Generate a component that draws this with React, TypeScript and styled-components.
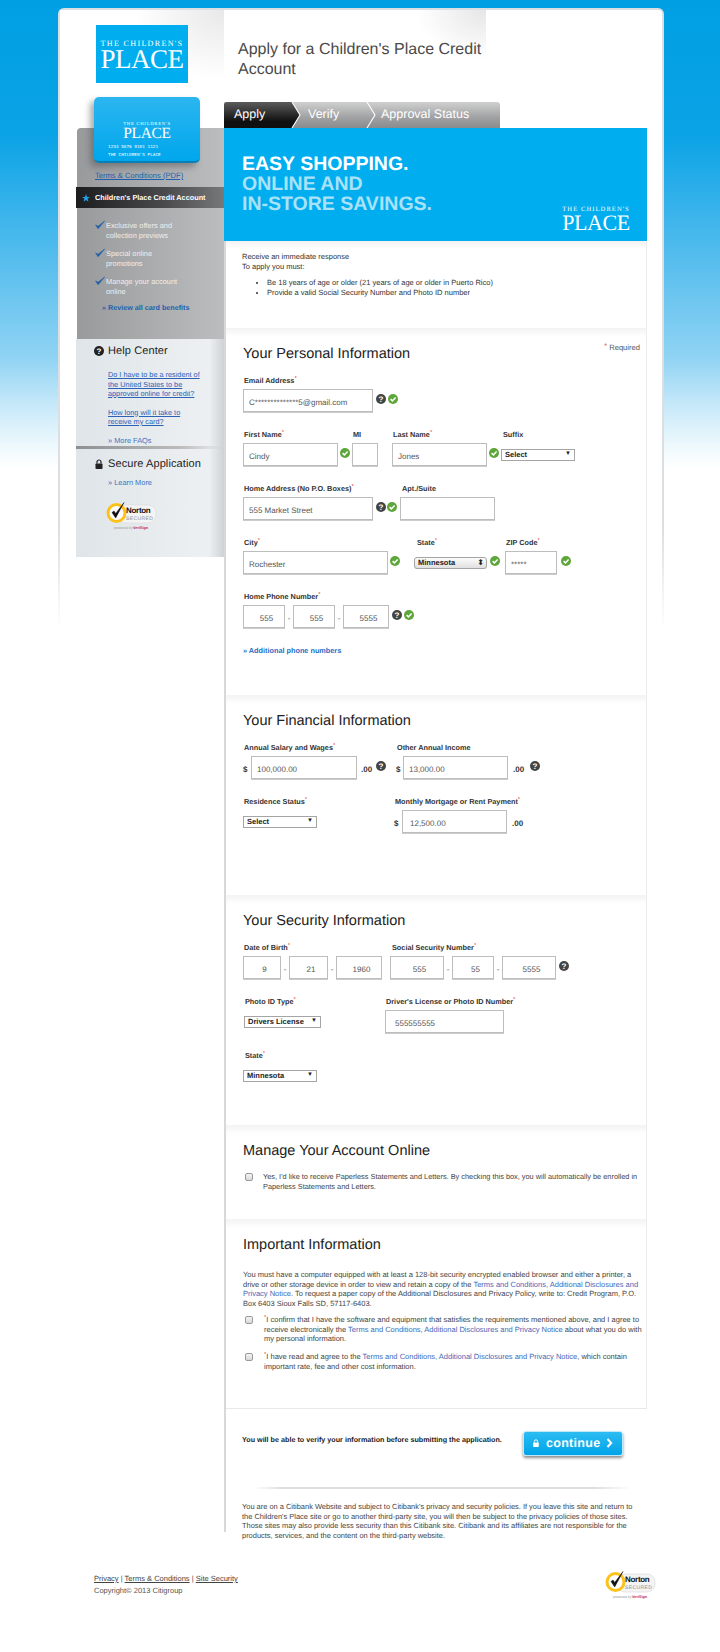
import React from "react";
import styled, { createGlobalStyle } from "styled-components";

const Global = createGlobalStyle`
  html, body { margin: 0; padding: 0; background: #fff; }
  * { box-sizing: border-box; }
  body {
    font-family: "Liberation Sans", Arial, sans-serif;
    color: #333;
    text-rendering: geometricPrecision;
  }
  input, select, button { text-rendering: geometricPrecision; }
`;

const Page = styled.div`
  width: 720px;
  height: 1652px;
  overflow: hidden;
  padding-top: 8px;
  background: linear-gradient(#009fe3 0, #0aa3e6 134px, #5bbfee 268px, #8fd3f3 357px, #c3e7f9 402px, #eef9fd 446px, #fff 469px);
`;

const Shell = styled.div`
  position: relative;
  width: 606px;
  margin-left: 58px;
  height: 1644px;
  background: #fff;
  border-radius: 6px 6px 0 0;
  border: 2px solid #dcdfe1;
  border-bottom: 0;
  &::after {
    content: "";
    position: absolute;
    left: -2px;
    right: -2px;
    top: 520px;
    bottom: 0;
    pointer-events: none;
    background: linear-gradient(rgba(255,255,255,0), #fff 100px);
    clip-path: polygon(0 0, 2px 0, 2px 100%, 0 100%, 0 0, 100% 0, 100% 100%, calc(100% - 2px) 100%, calc(100% - 2px) 0);
  }
`;

const Header = styled.header`
  display: flex;
  height: 92px;
`;

const LogoCell = styled.div`
  width: 164px;
  padding: 15px 0 0 36px;
  background: radial-gradient(ellipse 90px 70px at 100% 0, #e8e8e8, #fff 100%);
`;

const TitleCell = styled.div`
  width: 262px;
  padding: 30px 0 0 14px;
  background: radial-gradient(ellipse 70px 50px at 100% 0, #e6e6e6, #fff 100%);
`;

const Title = styled.h1`
  margin: 0;
  font-size: 16px;
  font-weight: 400;
  line-height: 20px;
  color: #4a4a4a;
`;

const BrandLogo = styled.div<{ $w: number; $h: number; $size: number; $bg?: string }>`
  width: ${(p) => p.$w}px;
  height: ${(p) => p.$h}px;
  padding-top: ${(p) => p.$size * 0.2}px;
  background: ${(p) => p.$bg || "transparent"};
  display: flex;
  flex-direction: column;
  align-items: center;
  justify-content: center;
  color: #fff;
  font-family: "Liberation Serif", serif;
  font-weight: 400;
  line-height: 1;
  span:first-child {
    font-size: ${(p) => p.$size * 0.3}px;
    letter-spacing: ${(p) => p.$size * 0.048}px;
    white-space: nowrap;
  }
  span:last-child {
    font-size: ${(p) => p.$size}px;
    letter-spacing: ${(p) => p.$size * -0.02}px;
    margin-top: ${(p) => p.$size * -0.08}px;
  }
`;

const Main = styled.div`
  display: flex;
  align-items: flex-start;
`;

const Sidebar = styled.aside`
  position: relative;
  width: 147px;
  margin: 26px 0 0 17px;
`;

const CreditCard = styled.div`
  position: absolute;
  left: 17px;
  top: -31px;
  width: 106px;
  height: 66px;
  border-radius: 5px;
  background: linear-gradient(#2bb6f0, #00a6ec);
  border-bottom: 2px solid #0a7fb5;
  box-shadow: -4px 4px 6px rgba(70, 70, 70, 0.45);
  padding: 25px 0 0 14px;
  color: #fff;
  z-index: 2;
`;

const CardLogo = styled(BrandLogo)`
  margin: 0 0 0 11px;
`;

const CardNum = styled.div`
  font-family: "Liberation Mono", monospace;
  font-size: 4.4px;
  line-height: 8px;
  white-space: nowrap;
`;

const CardGap = styled.div`
  height: 5px;
`;

const GreyBlock = styled.div`
  height: 211px;
  padding-top: 43px;
  background: linear-gradient(90deg, #989a9c, #bcbdbf);
  border-radius: 4px 0 0 0;
  font-size: 7.4px;
`;

const TermsLink = styled.a`
  display: block;
  margin-left: 18px;
  height: 16px;
  font-size: 7.6px;
  line-height: 10px;
  color: #1f5fb0;
  text-decoration: underline;
`;

const DarkBar = styled.div`
  display: flex;
  align-items: center;
  height: 21px;
  margin-left: -1px;
  padding-left: 6px;
  background: linear-gradient(90deg, #1d1d1f, #4a4a4c 60%, #77787a);
  color: #fff;
  font-weight: 700;
  font-size: 7.3px;
  gap: 5px;
`;

const Perks = styled.ul`
  list-style: none;
  margin: 13px 0 0 0;
  padding: 0 0 0 23px;
`;

const Perk = styled.li`
  position: relative;
  height: 28px;
  padding-left: 6px;
  color: #eee;
  font-size: 7.4px;
  line-height: 9.5px;
  svg {
    position: absolute;
    left: -5px;
    top: -1px;
  }
`;

const Review = styled.a`
  display: block;
  margin: -2px 0 0 25px;
  color: #1f5fb0;
  font-size: 7.2px;
  font-weight: 700;
`;

const HelpBlock = styled.div`
  position: relative;
  height: 218px;
  margin-left: -1px;
  background: linear-gradient(90deg, #dfe5e9, #edf0f2 90%, #cfd2d4);
  padding-top: 4px;
`;

const SideHead = styled.div`
  display: flex;
  align-items: center;
  height: 16px;
  margin-left: 18px;
  gap: 4px;
  font-size: 11px;
  color: #222;
  letter-spacing: 0.1px;
`;

const SideLink = styled.a`
  display: block;
  margin-left: 32px;
  font-size: 7.3px;
  line-height: 9.5px;
  color: #2a62b8;
  text-decoration: underline;
`;

const SideLinks = styled.div`
  display: flex;
  flex-direction: column;
  gap: 9px;
  margin-top: 11px;
`;

const More = styled.a<{ $mt: number }>`
  display: block;
  margin: ${(p) => p.$mt}px 0 0 32px;
  font-size: 7.4px;
  line-height: 10px;
  color: #3d74c0;
`;

const SideRule = styled.div`
  height: 3px;
  margin: 0 0 7px;
  background: linear-gradient(90deg, #8d8f91, #bbb 70%, rgba(200,200,200,0));
`;

const NortonWrap = styled.div`
  margin: 11px 0 0 30px;
`;

const Content = styled.main`
  width: 423px;
  border-left: 2px solid #d8d8d8;
`;

const Tabs = styled.div`
  display: flex;
  align-items: stretch;
  width: 276px;
  height: 25.5px;
  margin-left: -2px;
  background: linear-gradient(#d0d0d0, #a0a1a3 60%, #8a8b8d);
  border-radius: 3px 3px 0 0;
  overflow: hidden;
`;

const Tab = styled.div<{ $active?: boolean; $w: number; $pad: number }>`
  width: ${(p) => p.$w}px;
  padding-left: ${(p) => p.$pad}px;
  line-height: 24px;
  font-size: 12.5px;
  color: #fff;
  background: ${(p) => (p.$active ? "linear-gradient(#5c5c5c, #101010 75%)" : "transparent")};
`;

const Arrow = styled.svg`
  display: block;
  flex: none;
  margin-right: -1px;
`;

const Hero = styled.div`
  position: relative;
  width: 423px;
  height: 113.5px;
  margin-left: -2px;
  padding: 26px 0 0 18px;
  background: #00aeef;
  font-weight: 700;
  font-size: 19.5px;
  line-height: 20px;
  color: #a9e1f8;
  b { color: #fff; display: block; }
`;

const HeroLogo = styled(BrandLogo)`
  position: absolute;
  right: 13px;
  bottom: 9px;
`;

const Section = styled.section<{ $h: number }>`
  position: relative;
  height: ${(p) => p.$h}px;
  padding: 16px 0 0 17px;
  border-right: 1px solid #ececec;
  background: linear-gradient(#f3f3f3, #fff 9px) no-repeat;
`;

const Intro = styled.div`
  height: 87px;
  padding: 11px 0 0 16px;
  border-right: 1px solid #ececec;
  font-size: 7.5px;
  line-height: 9.5px;
  color: #333;
  background: linear-gradient(#f2f2f2, #fff 8px) no-repeat;
  ul { margin: 7px 0 0; padding: 0 0 0 25px; }
`;

const H2 = styled.h2<{ $mb?: number }>`
  margin: 0 0 ${(p) => p.$mb ?? 12}px;
  font-size: 14.5px;
  line-height: 20px;
  font-weight: 400;
  color: #222;
`;

const Required = styled.div`
  position: absolute;
  right: 6px;
  top: 15px;
  font-size: 7.6px;
  color: #555;
  i { color: #e33; font-style: normal; vertical-align: 2px; font-size: 7px; line-height: 0; }
`;

const Row = styled.div`
  display: flex;
  align-items: flex-start;
  margin-bottom: 18px;
`;

const Field = styled.div<{ $w?: number; $dx?: number }>`
  width: ${(p) => (p.$w ? p.$w + "px" : "auto")};
  margin-left: ${(p) => p.$dx ?? 0}px;
  flex: none;
`;

const Label = styled.label<{ $pl?: number }>`
  display: block;
  height: 10px;
  margin-bottom: 3px;
  padding-left: ${(p) => p.$pl ?? 1}px;
  font-size: 7.3px;
  line-height: 10px;
  font-weight: 700;
  color: #333;
  white-space: nowrap;
  i { color: #e33; font-style: normal; font-size: 6px; line-height: 0; vertical-align: 3px; font-weight: 400; }
`;

const Controls = styled.div`
  display: flex;
  align-items: center;
  height: 23px;
`;

const Input = styled.input<{ $w: number; $center?: boolean; $pad?: number }>`
  width: ${(p) => p.$w}px;
  height: 23px;
  flex: none;
  padding: 3px 0 0 ${(p) => p.$pad ?? 5}px;
  border: 1px solid #bdbdbd;
  box-shadow: 0 1px 0 #ccc;
  outline: 0;
  background: #fff;
  color: #555;
  font: 8px "Liberation Sans", Arial, sans-serif;
  text-align: ${(p) => (p.$center ? "center" : "left")};
`;

const Sel = styled.select<{ $w: number }>`
  appearance: none;
  display: block;
  width: ${(p) => p.$w}px;
  height: 12px;
  padding: 0 0 0 3px;
  border: 1px solid #a5a5a5;
  border-radius: 0;
  background: transparent;
  color: #222;
  font: 700 7.5px "Liberation Sans", Arial, sans-serif;
  outline: 0;
`;

const SelWrap = styled.div<{ $stepper?: boolean }>`
  position: relative;
  flex: none;
  background: ${(p) => (p.$stepper ? "linear-gradient(#fff, #ddd)" : "#fff")};
  border-radius: ${(p) => (p.$stepper ? "3px" : "0")};
  select { border-radius: ${(p) => (p.$stepper ? "3px" : "0")}; }
  &::after {
    content: "${(p) => (p.$stepper ? "⬍" : "▼")}";
    position: absolute;
    right: ${(p) => (p.$stepper ? 3 : 4)}px;
    top: 0;
    line-height: 11px;
    font-size: ${(p) => (p.$stepper ? 8 : 6)}px;
    color: #222;
    pointer-events: none;
  }
`;

const Gap = styled.span<{ $w: number }>`
  display: inline-block;
  flex: none;
  width: ${(p) => p.$w}px;
`;

const Dash = styled.span<{ $w: number }>`
  flex: none;
  width: ${(p) => p.$w}px;
  text-align: center;
  padding-top: 4px;
  font-size: 8px;
  color: #555;
`;

const Money = styled.span<{ $w: number }>`
  flex: none;
  width: ${(p) => p.$w}px;
  font-size: 8px;
  font-weight: 700;
  padding-top: 3px;
  color: #333;
`;

const AddPhones = styled.a`
  display: block;
  font-size: 7.3px;
  font-weight: 700;
  color: #1f6cc4;
  line-height: 10px;
  margin-top: 1px;
`;

const CheckLine = styled.div<{ $size?: number }>`
  display: flex;
  margin-bottom: 8.5px;
  font-size: ${(p) => p.$size ?? 7.5}px;
  line-height: 9.5px;
  color: #444;
  a { color: #3f68b8; }
`;

const Box = styled.span`
  flex: none;
  width: 8px;
  height: 8px;
  margin: 1px 0 0 2px;
  border: 1px solid #9a9a9a;
  border-radius: 2px;
  background: linear-gradient(#f4f4f4, #d8d8d8);
`;

const CheckText = styled.div<{ $pad: number }>`
  margin-left: ${(p) => p.$pad}px;
  width: 382px;
  i { color: #e33; font-style: normal; font-size: 6px; line-height: 0; vertical-align: 3px; }
`;

const Para = styled.p`
  margin: 15px 0 7px;
  width: 401px;
  font-size: 7.5px;
  line-height: 9.5px;
  color: #444;
  a { color: #3f68b8; }
`;

const ContentFoot = styled.div`
  border-top: 1px solid #e8e8e8;
  height: 124px;
  padding: 0 0 0 16px;
`;

const ContinueRow = styled.div`
  display: flex;
  align-items: center;
  width: 381px;
  height: 46px;
  margin-top: 11px;
  font-size: 7.2px;
  font-weight: 700;
  color: #222;
  white-space: nowrap;
  span { margin-top: -8px; }
`;

const Continue = styled.button`
  display: flex;
  align-items: center;
  flex: none;
  width: 100px;
  height: 25px;
  margin-left: auto;
  padding: 0 0 0 8px;
  gap: 6px;
  border: 1px solid #bfe8fa;
  border-radius: 3px;
  background: linear-gradient(#2cbcf2, #00a4e8);
  box-shadow: 0 2px 3px rgba(0,0,0,.45);
  color: #fff;
  font: 700 12.5px "Liberation Sans", Arial, sans-serif;
  letter-spacing: 0.3px;
`;

const Rule = styled.div`
  height: 2px;
  margin: 21px 16px 13px 11px;
  background: linear-gradient(90deg, rgba(210,210,210,0), #ddd 8%, #ddd 90%, rgba(210,210,210,0));
`;

const Legal = styled.p`
  margin: 0;
  width: 398px;
  font-size: 7.45px;
  line-height: 9.5px;
  color: #444;
`;

const Footer = styled.footer`
  display: flex;
  justify-content: space-between;
  align-items: flex-start;
  padding: 41px 5px 0 34px;
  font-size: 7.5px;
  line-height: 12px;
  color: #555;
  a { color: #444; text-decoration: underline; }
  svg { margin-top: -5px; }
`;

const Glyph = styled.svg<{ $dx?: number }>`
  flex: none;
  margin-left: ${(p) => p.$dx ?? 0}px;
  margin-top: -4px;
`;

const Help = ({ dx = 0 }: { dx?: number }) => (
  <Glyph $dx={dx} width="10" height="10" viewBox="0 0 10 10">
    <circle cx="5" cy="5" r="5" fill="#444" />
    <text x="5" y="8" fontSize="8" fontWeight="700" textAnchor="middle" fill="#fff" fontFamily="Liberation Sans">?</text>
  </Glyph>
);

const Ok = ({ dx = 0 }: { dx?: number }) => (
  <Glyph $dx={dx} width="10" height="10" viewBox="0 0 10 10">
    <circle cx="5" cy="5" r="5" fill="#5da63a" />
    <path d="M2.6 5.1 4.4 6.9 7.6 3.4" fill="none" stroke="#fff" strokeWidth="1.5" />
  </Glyph>
);

const Tick = () => (
  <svg width="10" height="10" viewBox="0 0 10 10">
    <path d="M0.6 5 3.1 8.8 9.6 1 3.1 6.2Z" fill="#1a5ca8" stroke="#1a5ca8" strokeWidth="0.5" />
  </svg>
);

const Star = () => (
  <svg width="8" height="8" viewBox="0 0 10 10">
    <path d="M5 0 6.3 3.6 10 3.7 7 6 8.1 9.8 5 7.6 1.9 9.8 3 6 0 3.7 3.7 3.6Z" fill="#1e9fe6" />
  </svg>
);

const Lock = ({ color = "#222", size = 10 }: { color?: string; size?: number }) => (
  <svg width={size} height={size} viewBox="0 0 10 10">
    <rect x="1.5" y="4.4" width="7" height="5.6" rx="0.8" fill={color} />
    <path d="M3 4.6V3a2 2 0 0 1 4 0v1.6" fill="none" stroke={color} strokeWidth="1.2" />
  </svg>
);

const Norton = () => (
  <svg width="52" height="31" viewBox="0 0 52 31">
    <rect x="12" y="6" width="38" height="18" rx="8" fill="#f4f4f4" stroke="#ddd" strokeWidth="0.7" />
    <circle cx="10.5" cy="14" r="8.5" fill="#fff" stroke="#fcc21b" strokeWidth="3" />
    <path d="M6 13.5 9.7 19 18 3.5 9.7 14.5 8 12Z" fill="#111" stroke="#111" strokeWidth="0.5" />
    <text x="20" y="14" fontSize="8" fontWeight="700" fill="#111" fontFamily="Liberation Sans" letterSpacing="-0.3">Norton</text>
    <text x="20" y="21" fontSize="5" fill="#888" fontFamily="Liberation Sans" letterSpacing="0.4">SECURED</text>
    <text x="8" y="30" fontSize="3.6" fill="#999" fontFamily="Liberation Sans">powered by</text>
    <text x="27" y="30" fontSize="3.8" fontWeight="700" fill="#c2185b" fontFamily="Liberation Sans">VeriSign</text>
  </svg>
);

const Req = () => <i>*</i>;

const TabArrow = ({ dark }: { dark?: boolean }) => (
  <Arrow width="10" height="26" viewBox="0 0 10 26">
    <defs>
      <linearGradient id="dk" x1="0" y1="0" x2="0" y2="1">
        <stop offset="0" stopColor="#5c5c5c" />
        <stop offset="0.75" stopColor="#101010" />
      </linearGradient>
    </defs>
    {dark && <path d="M0 0H1L9 13 1 26H0Z" fill="url(#dk)" />}
    <path d="M1 0 9 13 1 26" fill="none" stroke="#fff" strokeWidth="1.1" />
  </Arrow>
);

export default function App() {
  return (
    <Page>
      <Global />
      <Shell>
        <Header>
          <LogoCell>
            <BrandLogo $w={92} $h={58} $size={27} $bg="#00aeef">
              <span>THE CHILDREN'S</span>
              <span>PLACE</span>
            </BrandLogo>
          </LogoCell>
          <TitleCell>
            <Title>Apply for a Children's Place Credit Account</Title>
          </TitleCell>
        </Header>
        <Main>
          <Sidebar>
            <CreditCard>
              <CardLogo $w={56} $h={17} $size={15.5}>
                <span>THE CHILDREN'S</span>
                <span>PLACE</span>
              </CardLogo>
              <CardGap />
              <CardNum>1234 5678 9101 1121</CardNum>
              <CardNum>THE CHILDREN'S PLACE</CardNum>
            </CreditCard>
            <GreyBlock>
              <TermsLink>Terms &amp; Conditions (PDF)</TermsLink>
              <DarkBar>
                <Star />
                <span>Children's Place Credit Account</span>
              </DarkBar>
              <Perks>
                <Perk><Tick />Exclusive offers and<br />collection previews</Perk>
                <Perk><Tick />Special online<br />promotions</Perk>
                <Perk><Tick />Manage your account<br />online</Perk>
              </Perks>
              <Review>» Review all card benefits</Review>
            </GreyBlock>
            <HelpBlock>
              <SideHead>
                <svg width="10" height="10" viewBox="0 0 10 10">
                  <circle cx="5" cy="5" r="5" fill="#222" />
                  <text x="5" y="8" fontSize="8" fontWeight="700" textAnchor="middle" fill="#fff" fontFamily="Liberation Sans">?</text>
                </svg>
                Help Center
              </SideHead>
              <SideLinks>
                <SideLink>Do I have to be a resident of<br />the United States to be<br />approved online for credit?</SideLink>
                <SideLink>How long will it take to<br />receive my card?</SideLink>
              </SideLinks>
              <More $mt={9}>» More FAQs</More>
              <SideRule />
              <SideHead>
                <Lock />
                Secure Application
              </SideHead>
              <More $mt={6}>» Learn More</More>
              <NortonWrap><Norton /></NortonWrap>
            </HelpBlock>
          </Sidebar>
          <Content>
            <Tabs>
              <Tab $active $w={67} $pad={10}>Apply</Tab>
              <TabArrow dark />
              <Tab $w={66} $pad={8}>Verify</Tab>
              <TabArrow />
              <Tab $w={120} $pad={6}>Approval Status</Tab>
            </Tabs>
            <Hero>
              <b>EASY SHOPPING.</b>
              ONLINE AND
              <br />
              IN-STORE SAVINGS.
              <HeroLogo $w={76} $h={28} $size={22}>
                <span>THE CHILDREN'S</span>
                <span>PLACE</span>
              </HeroLogo>
            </Hero>
            <Intro>
              Receive an immediate response
              <br />
              To apply you must:
              <ul>
                <li>Be 18 years of age or older (21 years of age or older in Puerto Rico)</li>
                <li>Provide a valid Social Security Number and Photo ID number</li>
              </ul>
            </Intro>

            <Section $h={367}>
              <H2>Your Personal Information</H2>
              <Required><i>*</i> Required</Required>
              <Row>
                <Field>
                  <Label>Email Address<Req /></Label>
                  <Controls>
                    <Input $w={130} readOnly value="C**************5@gmail.com" />
                    <Help dx={3} /><Ok dx={2} />
                  </Controls>
                </Field>
              </Row>
              <Row>
                <Field $w={109}>
                  <Label>First Name<Req /></Label>
                  <Controls><Input $w={95} readOnly value="Cindy" /><Ok dx={2} /></Controls>
                </Field>
                <Field $w={40}>
                  <Label>MI</Label>
                  <Controls><Input $w={26} readOnly value="" /></Controls>
                </Field>
                <Field $w={109}>
                  <Label>Last Name<Req /></Label>
                  <Controls><Input $w={95} readOnly value="Jones" /><Ok dx={2} /></Controls>
                </Field>
                <Field>
                  <Label $pl={2}>Suffix</Label>
                  <Controls>
                    <SelWrap><Sel $w={74}><option>Select</option></Sel></SelWrap>
                  </Controls>
                </Field>
              </Row>
              <Row>
                <Field $w={157}>
                  <Label>Home Address (No P.O. Boxes)<Req /></Label>
                  <Controls>
                    <Input $w={130} readOnly value="555 Market Street" />
                    <Help dx={3} /><Ok dx={1} />
                  </Controls>
                </Field>
                <Field>
                  <Label $pl={2}>Apt./Suite</Label>
                  <Controls><Input $w={95} readOnly value="" /></Controls>
                </Field>
              </Row>
              <Row>
                <Field $w={171}>
                  <Label>City<Req /></Label>
                  <Controls><Input $w={145} readOnly value="Rochester" /><Ok dx={2} /></Controls>
                </Field>
                <Field $w={91}>
                  <Label $pl={3}>State<Req /></Label>
                  <Controls>
                    <SelWrap $stepper><Sel $w={73}><option>Minnesota</option></Sel></SelWrap>
                    <Ok dx={3} />
                  </Controls>
                </Field>
                <Field>
                  <Label $pl={1}>ZIP Code<Req /></Label>
                  <Controls><Input $w={52} readOnly value="*****" /><Ok dx={4} /></Controls>
                </Field>
              </Row>
              <Row>
                <Field>
                  <Label>Home Phone Number<Req /></Label>
                  <Controls>
                    <Input $w={42} $center readOnly value="555" />
                    <Dash $w={8}>-</Dash>
                    <Input $w={42} $center readOnly value="555" />
                    <Dash $w={8}>-</Dash>
                    <Input $w={46} $center readOnly value="5555" />
                    <Help dx={3} /><Ok dx={2} />
                  </Controls>
                </Field>
              </Row>
              <AddPhones>» Additional phone numbers</AddPhones>
            </Section>

            <Section $h={200}>
              <H2>Your Financial Information</H2>
              <Row>
                <Field $w={153}>
                  <Label>Annual Salary and Wages<Req /></Label>
                  <Controls>
                    <Money $w={8}>$</Money>
                    <Input $w={106} $pad={5} readOnly value="100,000.00" />
                    <Gap $w={4} /><Money $w={15}>.00</Money>
                    <Help />
                  </Controls>
                </Field>
                <Field>
                  <Label>Other Annual Income</Label>
                  <Controls>
                    <Money $w={7}>$</Money>
                    <Input $w={105} $pad={5} readOnly value="13,000.00" />
                    <Gap $w={5} /><Money $w={14}>.00</Money>
                    <Help dx={3} />
                  </Controls>
                </Field>
              </Row>
              <Row>
                <Field $w={151}>
                  <Label>Residence Status<Req /></Label>
                  <Controls>
                    <SelWrap><Sel $w={74}><option>Select</option></Sel></SelWrap>
                  </Controls>
                </Field>
                <Field>
                  <Label>Monthly Mortgage or Rent Payment<Req /></Label>
                  <Controls>
                    <Money $w={8}>$</Money>
                    <Input $w={105} $pad={7} readOnly value="12,500.00" />
                    <Gap $w={5} /><Money $w={14}>.00</Money>
                  </Controls>
                </Field>
              </Row>
            </Section>

            <Section $h={230}>
              <H2>Your Security Information</H2>
              <Row>
                <Field $w={147}>
                  <Label>Date of Birth<Req /></Label>
                  <Controls>
                    <Input $w={38} $center readOnly value="9" />
                    <Dash $w={8}>-</Dash>
                    <Input $w={39} $center readOnly value="21" />
                    <Dash $w={8}>-</Dash>
                    <Input $w={46} $center readOnly value="1960" />
                  </Controls>
                </Field>
                <Field>
                  <Label $pl={2}>Social Security Number<Req /></Label>
                  <Controls>
                    <Input $w={54} $center readOnly value="555" />
                    <Dash $w={8}>-</Dash>
                    <Input $w={42} $center readOnly value="55" />
                    <Dash $w={8}>-</Dash>
                    <Input $w={54} $center readOnly value="5555" />
                    <Help dx={3} />
                  </Controls>
                </Field>
              </Row>
              <Row>
                <Field $w={141} $dx={1}>
                  <Label>Photo ID Type<Req /></Label>
                  <Controls>
                    <SelWrap><Sel $w={77}><option>Drivers License</option></Sel></SelWrap>
                  </Controls>
                </Field>
                <Field>
                  <Label>Driver's License or Photo ID Number<Req /></Label>
                  <Controls><Input $w={119} $pad={9} readOnly value="555555555" /></Controls>
                </Field>
              </Row>
              <Row>
                <Field>
                  <Label $pl={2}>State<Req /></Label>
                  <Controls>
                    <SelWrap><Sel $w={74}><option>Minnesota</option></Sel></SelWrap>
                  </Controls>
                </Field>
              </Row>
            </Section>

            <Section $h={94}>
              <H2 $mb={11}>Manage Your Account Online</H2>
              <CheckLine $size={7.37}>
                <Box />
                <CheckText $pad={10}>
                  Yes, I'd like to receive Paperless Statements and Letters. By checking this box, you will automatically be enrolled in Paperless Statements and Letters.
                </CheckText>
              </CheckLine>
            </Section>

            <Section $h={189}>
              <H2 $mb={0}>Important Information</H2>
              <Para>
                You must have a computer equipped with at least a 128-bit security encrypted enabled browser and either a printer, a drive or other storage device in order to view and retain a copy of the <a>Terms and Conditions, Additional Disclosures and Privacy Notice</a>. To request a paper copy of the Additional Disclosures and Privacy Policy, write to: Credit Program, P.O. Box 6403 Sioux Falls SD, 57117-6403.
              </Para>
              <CheckLine>
                <Box />
                <CheckText $pad={11}>
                  <Req />I confirm that I have the software and equipment that satisfies the requirements mentioned above, and I agree to receive electronically the <a>Terms and Conditions, Additional Disclosures and Privacy Notice</a> about what you do with my personal information.
                </CheckText>
              </CheckLine>
              <CheckLine>
                <Box />
                <CheckText $pad={11}>
                  <Req />I have read and agree to the <a>Terms and Conditions, Additional Disclosures and Privacy Notice</a>, which contain important rate, fee and other cost information.
                </CheckText>
              </CheckLine>
            </Section>

            <ContentFoot>
              <ContinueRow>
                <span>You will be able to verify your information before submitting the application.</span>
                <Continue>
                  <Lock color="#fff" size={8} />
                  continue
                  <svg width="7" height="10" viewBox="0 0 7 10">
                    <path d="M1.5 1 5.2 5 1.5 9" fill="none" stroke="#fff" strokeWidth="2" />
                  </svg>
                </Continue>
              </ContinueRow>
              <Rule />
              <Legal>
                You are on a Citibank Website and subject to Citibank's privacy and security policies. If you leave this site and return to the Children's Place site or go to another third-party site, you will then be subject to the privacy policies of those sites. Those sites may also provide less security than this Citibank site. Citibank and its affiliates are not responsible for the products, services, and the content on the third-party website.
              </Legal>
            </ContentFoot>
          </Content>
        </Main>
        <Footer>
          <div>
            <a>Privacy</a> | <a>Terms &amp; Conditions</a> | <a>Site Security</a>
            <br />
            Copyright© 2013 Citigroup
          </div>
          <Norton />
        </Footer>
      </Shell>
    </Page>
  );
}
